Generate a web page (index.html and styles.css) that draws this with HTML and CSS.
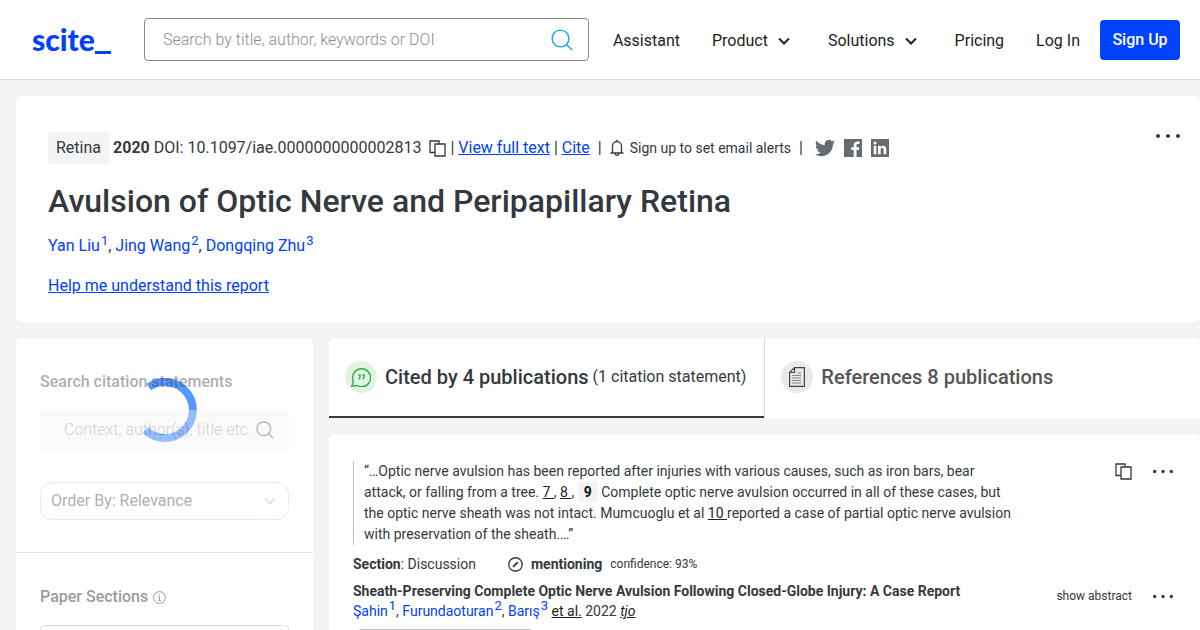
FILE: index.html
```html
<!DOCTYPE html>
<html lang="en">
<head>
<meta charset="utf-8">
<title>Avulsion of Optic Nerve and Peripapillary Retina</title>
<link rel="stylesheet" href="styles.css">
</head>
<body>
<svg width="0" height="0" class="defs" aria-hidden="true">
  <symbol id="copy" viewBox="0 0 17 17"><path d="M5.500 12.500H1V1h9v2.500M6 4h10v12H6z" fill="none" stroke="currentColor" stroke-width="1.300"/></symbol>
  <symbol id="search" viewBox="0 0 22 22"><circle cx="9.500" cy="9.500" r="8.400" fill="none" stroke="currentColor" stroke-width="1.400"/><path d="M15.500 15.500l5.500 5.500" stroke="currentColor" stroke-width="1.400"/></symbol>
  <symbol id="dots" viewBox="0 0 26 6"><g fill="currentColor"><circle cx="3" cy="3" r="2"/><circle cx="13" cy="3" r="2"/><circle cx="23" cy="3" r="2"/></g></symbol>
  <symbol id="chevron" viewBox="0 0 12 8"><path d="M1 1.500l5 5 5-5" fill="none" stroke="currentColor" stroke-width="2"/></symbol>
</svg>
<header class="topbar">
  <a class="logo" href="#">scite<span class="logo-line"></span></a>
  <form class="search">
    <input type="text" aria-label="Search" placeholder="Search by title, author, keywords or DOI">
    <button type="button" aria-label="Search"><svg width="22" height="22"><use href="#search"/></svg></button>
  </form>
  <nav class="nav">
    <a href="#">Assistant</a>
    <button type="button">Product <svg width="12" height="8"><use href="#chevron"/></svg></button>
    <button type="button">Solutions <svg width="12" height="8"><use href="#chevron"/></svg></button>
    <a href="#">Pricing</a>
    <a href="#">Log In</a>
  </nav>
  <button type="button" class="signup">Sign Up</button>
</header>
<main class="page">
  <section class="card paper">
    <div class="meta">
      <span class="tag">Retina</span>
      <b>2020</b>
      <span>DOI: 10.1097/iae.0000000000002813</span>
      <button type="button" class="copy" aria-label="Copy DOI"><svg width="17" height="17"><use href="#copy"/></svg></button>
      <span>|</span>
      <a href="#">View full text</a>
      <span>|</span>
      <a href="#">Cite</a>
      <span class="bar">|</span>
      <button type="button" class="alerts"><svg width="14" height="18" viewBox="0 0 14 18" fill="none" stroke="currentColor" stroke-width="1.300"><path d="M.5 14h13M2.500 14V7.500C2.500 4.500 4.500 2.500 7 2.500s4.500 2 4.500 5V14M7 2.500V.800M5.300 14.500c0 2.500 3.400 2.500 3.400 0"/></svg>Sign up to set email alerts</button>
      <span class="bar">|</span>
      <div class="share">
        <a href="#" aria-label="Twitter"><svg width="20" height="18" viewBox="0 2 24 20" fill="currentColor"><path d="M23.950 4.570a10 10 0 0 1-2.820.770 4.960 4.960 0 0 0 2.160-2.720c-.950.550-2 .960-3.130 1.180a4.920 4.920 0 0 0-8.380 4.480C7.690 8.100 4.070 6.130 1.640 3.160a4.920 4.920 0 0 0 1.520 6.570 4.900 4.900 0 0 1-2.230-.610v.060a4.920 4.920 0 0 0 3.950 4.830 5 5 0 0 1-2.210.080 4.940 4.940 0 0 0 4.600 3.420A9.870 9.870 0 0 1 0 19.540a13.990 13.990 0 0 0 7.550 2.210c9.050 0 14-7.500 14-13.990l-.020-.630a9.940 9.940 0 0 0 2.420-2.560z"/></svg></a>
        <a href="#" aria-label="Facebook"><svg width="18" height="18" viewBox="0 0 18 18" fill="currentColor"><path d="M0 0h18v18h-5.500v-7H15l.400-2.800h-2.900V6.500c0-.900.300-1.400 1.500-1.400h1.500V2.600c-3.500-.500-5.800.400-5.800 3.500v2.100H7.300V11h2.400v7H0z"/></svg></a>
        <a href="#" aria-label="LinkedIn"><svg width="18" height="18" viewBox="0 0 18 18" fill="currentColor"><path fill-rule="evenodd" d="M0 0h18v18H0zM2.700 6.800v8.500h2.600V6.800zM4 2.600a1.500 1.500 0 1 0 0 3 1.500 1.500 0 0 0 0-3zM7 6.800v8.500h2.600v-4.500c0-2.500 3-2.500 3 0v4.500h2.700v-5c0-4.200-4.300-4.500-5.700-2.300V6.800z"/></svg></a>
      </div>
    </div>
    <h1>Avulsion of Optic Nerve and Peripapillary Retina</h1>
    <p class="authors"><a href="#">Yan Liu<sup>1</sup></a>, <a href="#">Jing Wang<sup>2</sup></a>, <a href="#">Dongqing Zhu<sup>3</sup></a></p>
    <a class="help" href="#">Help me understand this report</a>
    <button type="button" class="paper-menu" aria-label="More"><svg width="26" height="6"><use href="#dots"/></svg></button>
  </section>
  <div class="columns">
    <aside class="card sidebar">
      <svg class="spinner" width="64" height="64" viewBox="0 0 64 64" aria-hidden="true"><path d="M15.700 9.100A28 28 0 1 1 12.500 52.200" fill="none" stroke="#5797ff" stroke-width="8"/></svg>
      <form class="filters">
        <label for="ctx">Search citation statements</label>
        <div class="context"><input id="ctx" type="text" placeholder="Context, author(s), title etc."><svg width="18" height="18"><use href="#search"/></svg></div>
        <div class="order"><select aria-label="Order"><option>Order By: Relevance</option></select><svg width="12" height="8"><use href="#chevron"/></svg></div>
      </form>
      <div class="sections">
        <h2>Paper Sections <svg width="13" height="13" viewBox="0 0 13 13" fill="none" stroke="currentColor"><circle cx="6.500" cy="6.500" r="5.900"/><path d="M5.500 5.500h1v4M5.300 9.500h2.400M6 3.500h1"/></svg></h2>
        <div class="section-list"></div>
      </div>
    </aside>
    <div class="results">
      <div class="tabs">
        <button type="button" class="tab active">
          <span class="dot green"><svg width="20" height="20" viewBox="0 0 20 20" fill="none" stroke="currentColor" stroke-width="1.400"><path d="M.8 19.200l1.600-4.700A9 9 0 1 1 6 18.500z"/><path d="M7.300 8h1.700v1.800q0 1.800-1.400 2.200M11.300 8H13v1.800q0 1.800-1.400 2.200"/></svg></span>
          <span class="tab-title">Cited by 4 publications</span> <span>(1 citation statement)</span>
        </button>
        <button type="button" class="tab">
          <span class="dot"><svg width="16" height="20" viewBox="0 0 16 20" fill="none" stroke="#444" stroke-width="1.200"><path d="M5.500.600h9.900v18.800H.600V5.500zM5.500.600v4.900H.600"/><path d="M8 6h4M3 8.500h9M3 11h9M3 13.500h9M3 16h9" stroke="#888"/></svg></span>
          <span class="tab-title">References 8 publications</span>
        </button>
      </div>
      <article class="card citation">
        <div class="excerpt">
          <blockquote>“…Optic nerve avulsion has been reported after injuries with various causes, such as iron bars, bear attack, or falling from a tree. <a href="#">7 </a>, <a href="#">8 </a>, <b>9</b> Complete optic nerve avulsion occurred in all of these cases, but the optic nerve sheath was not intact. Mumcuoglu et al <a href="#">10 </a>reported a case of partial optic nerve avulsion with preservation of the sheath.…”</blockquote>
          <div class="tools">
            <button type="button" aria-label="Copy"><svg width="17" height="17"><use href="#copy"/></svg></button>
            <button type="button" aria-label="More"><svg width="22" height="5"><use href="#dots"/></svg></button>
          </div>
        </div>
        <div class="kind">
          <span class="where"><b>Section</b>: Discussion</span>
          <svg width="15" height="15" viewBox="0 0 14 14" fill="none" stroke="currentColor"><circle cx="7" cy="7" r="6.300" stroke-width="1.200"/><path d="M4.800 9.200l4.400-4.400" stroke-width="1.800"/></svg>
          <b>mentioning</b>
          <small>confidence: 93%</small>
        </div>
        <div class="source">
          <div>
            <h3>Sheath-Preserving Complete Optic Nerve Avulsion Following Closed-Globe Injury: A Case Report</h3>
            <p><a href="#">Şahin<sup>1</sup></a>, <a href="#">Furundaoturan<sup>2</sup></a>, <a href="#">Barış<sup>3</sup></a> <u>et al.</u> 2022 <u><i>tjo</i></u></p>
          </div>
          <div class="tools">
            <button type="button">show abstract</button>
            <button type="button" aria-label="More"><svg width="22" height="5"><use href="#dots"/></svg></button>
          </div>
        </div>
        <div class="badge"></div>
      </article>
    </div>
  </div>
</main>
</body>
</html>
```
FILE: styles.css
```css
* { box-sizing: border-box; }
body {
  margin: 0;
  height: 100vh;
  overflow: hidden;
  background: #f4f4f4;
  color: #33393e;
  font: 16px/20px Roboto, "Liberation Sans", sans-serif;
}
button, input, select { font: inherit; color: inherit; border: 0; background: none; padding: 0; margin: 0; }
h1, h2, h3, p, blockquote { margin: 0; }
a { color: #0040ff; }
b, h3 { font-weight: 700; }
svg { display: block; flex: none; }
.defs { position: absolute; }

.topbar {
  display: flex;
  align-items: center;
  height: 80px;
  padding: 0 20px 0 32px;
  background: #fff;
  border-bottom: 1px solid #d8d8d8;
}
.logo {
  display: flex;
  align-items: flex-end;
  width: 112px;
  padding-bottom: 2px;
  color: #0040ff;
  font: 900 30px/34px Lato, sans-serif;
  text-decoration: none;
}
.logo-line { width: 16px; height: 3px; margin-bottom: 2px; background: #0040ff; }
.search {
  display: flex;
  align-items: center;
  flex: 1;
  height: 43px;
  padding: 0 15px 0 18px;
  border: 1px solid #888;
  border-radius: 4px;
}
.search input { flex: 1; min-width: 0; outline: 0; }
input::placeholder { color: #8d8d8d; opacity: 1; font-weight: 300; }
.search button { color: #1da1f2; }
.nav { display: flex; align-items: center; gap: 32px; margin: 2px 20px 0 24px; color: #222; }
.nav a { color: inherit; text-decoration: none; }
.nav button { display: flex; align-items: center; gap: 10px; padding-right: 6px; }
.signup { width: 80px; height: 40px; border-radius: 4px; background: #0040ff; color: #fff; font-weight: 500; }

.page { padding: 16px 0 0 16px; }
.card { background: #fff; border-radius: 6px; }
.paper { position: relative; padding: 36px 32px 26px; }
.meta { display: flex; align-items: center; gap: 4px; height: 32px; white-space: nowrap; }
.tag { padding: 6px 8px; border-radius: 4px; background: #f4f4f4; }
.copy { margin: 0 0 0 4px; }
.bar { margin: 0 4px; }
.alerts { display: flex; align-items: center; gap: 6px; font-size: 14px; }
.share { display: flex; gap: 9px; margin-left: 4px; }
.share a { color: #666b70; }
h1 { margin-top: 16px; font-size: 32px; line-height: 42px; font-weight: 500; }
.authors { margin-top: 14px; }
.authors a, .source p a { text-decoration: none; }
sup { font-size: 13px; line-height: 0; margin-left: 1px; }
.help { display: inline-block; margin-top: 20px; }
.paper-menu { position: absolute; top: 37px; right: 19px; }

.columns { display: flex; gap: 16px; margin-top: 16px; align-items: flex-start; }
.sidebar { position: relative; flex: 0 0 297px; min-width: 0; height: 400px; }
.spinner { position: absolute; left: 117px; top: 40px; }
.filters { position: relative; padding: 34px 24px 32px; border-bottom: 1px solid #e4e4e4; }
.filters label { display: block; font-weight: 500; opacity: .4; }
.context { display: flex; align-items: center; height: 40px; margin-top: 18px; padding: 0 15px 0 24px; background: #f4f4f4; border-radius: 4px; opacity: .4; }
.context input { flex: 1; min-width: 0; }
.order { display: flex; align-items: center; height: 38px; margin-top: 32px; padding: 0 12px 0 10px; border: 1px solid #ccc; border-radius: 12px; opacity: .4; }
.order select { flex: 1; min-width: 0; appearance: none; }
.order svg { color: #bbb; }
.sections { padding: 34px 24px; opacity: .5; }
.sections h2 { display: flex; align-items: center; gap: 5px; font-size: 16px; line-height: 20px; font-weight: 500; }
.section-list { height: 40px; margin-top: 18px; border: 1px solid #bbb; border-radius: 4px; }

.results { flex: 1; min-width: 0; }
.tabs { display: flex; height: 80px; background: #fff; border-radius: 6px 6px 0 0; }
.tab { display: flex; align-items: center; gap: 4px; padding: 0 18px 0 16px; color: #555; white-space: nowrap; }
.tab.active { color: #33393e; border-bottom: 2px solid #33393e; }
.tab + .tab { border-left: 1px solid #ddd; padding-bottom: 2px; }
.dot { display: grid; place-items: center; width: 32px; height: 32px; margin-right: 4px; border-radius: 50%; background: #e9e9e9; }
.green { background: #dff5e1; color: #3aa34d; }
.tab-title { font-size: 20px; font-weight: 500; }

.citation { margin-top: 16px; padding: 27px 26px 0 24px; height: 300px; font-size: 14px; }
.excerpt { display: flex; justify-content: space-between; align-items: flex-start; }
blockquote { max-width: 660px; padding-left: 10px; border-left: 1px solid #bbb; line-height: 21px; }
blockquote a, .source u { color: #222; }
blockquote b { padding: 2px 6px; border-radius: 4px; background: #f4f4f4; color: #111; }
.tools { display: flex; align-items: center; gap: 20px; height: 20px; font-size: 12px; }
.kind { display: flex; align-items: center; gap: 8px; margin-top: 9px; }
.where { margin-right: 24px; }
small { font-size: 12px; }
.source { display: flex; justify-content: space-between; align-items: flex-start; margin-top: 7px; }
.source .tools { margin-top: 5px; }
h3 { font-size: 14px; line-height: 20px; }
.badge { width: 176px; height: 40px; margin: 8px 0 0 4px; border: 1px solid #bbb; border-radius: 4px; }
```
